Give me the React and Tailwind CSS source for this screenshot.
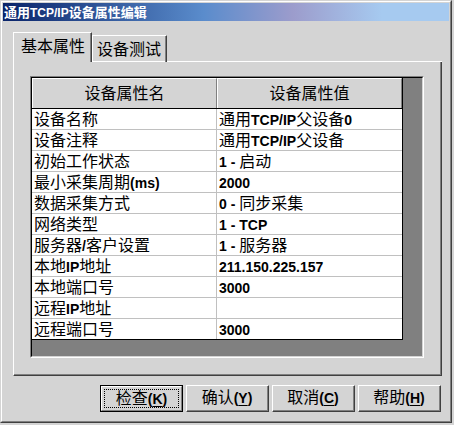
import React from "react";

const rows = [
  ["设备名称", "通用TCP/IP父设备0"],
  ["设备注释", "通用TCP/IP父设备"],
  ["初始工作状态", "1 - 启动"],
  ["最小采集周期(ms)", "2000"],
  ["数据采集方式", "0 - 同步采集"],
  ["网络类型", "1 - TCP"],
  ["服务器/客户设置", "1 - 服务器"],
  ["本地IP地址", "211.150.225.157"],
  ["本地端口号", "3000"],
  ["远程IP地址", ""],
  ["远程端口号", "3000"],
];

function Mixed({ text, latin, cjk }) {
  const parts = text.split(/([\x00-\x7F]+)/).filter(Boolean);
  return parts.map((p, i) =>
    /^[\x00-\x7F]+$/.test(p) ? (
      <span key={i} className={latin}>{p}</span>
    ) : (
      <span key={i} className={cjk}>{p}</span>
    )
  );
}

function Btn({ label, k, isDefault }) {
  const inner = (
    <span className="whitespace-nowrap leading-[20px]">
      <span className="text-[16px]">{label}</span>
      <span className="text-[14px] font-bold">
        (<span className="underline underline-offset-2">{k}</span>)
      </span>
    </span>
  );
  if (isDefault) {
    return (
      <div className="w-[83px] h-[27px] border border-black flex">
        <div className="flex-1 flex border-t border-l border-white border-r border-b border-r-[#808080] border-b-[#808080] p-[2px]">
          <div className="flex-1 flex items-center justify-center border border-dotted border-black">
            {inner}
          </div>
        </div>
      </div>
    );
  }
  return (
    <div className="w-[83px] h-[27px] flex border-t border-l border-white border-r border-b border-r-[#404040] border-b-[#404040]">
      <div className="flex-1 flex items-center justify-center border-r border-b border-r-[#808080] border-b-[#808080]">
        {inner}
      </div>
    </div>
  );
}

export default function App() {
  return (
    <div className="w-[454px] h-[425px] bg-[#d4d4d4] text-black font-['Liberation_Sans','Noto_Sans_CJK_SC',sans-serif] overflow-hidden">
      <div className="w-[452px] h-[423px] border-t border-l border-[#d4d4d4] border-r border-b border-r-[#404040] border-b-[#404040] flex">
        <div className="flex-1 flex flex-col border-t border-l border-white border-r border-b border-r-[#808080] border-b-[#808080] p-[1px]">
          {/* Title bar */}
          <div className="h-[18px] flex items-center pl-[1px] bg-[linear-gradient(to_right,#0a246a,#5a8ccc_45%,#9c9ccc_65%,#a6caf0_85%,#a6caf0)] text-white font-bold">
            <span className="leading-[18px] whitespace-nowrap">
              <Mixed text="通用TCP/IP设备属性编辑" latin="text-[12px]" cjk="text-[13px]" />
            </span>
          </div>

          {/* Tabs */}
          <div className="mt-[11px] ml-[10px] w-[429px] flex items-end">
            <div className="w-[79px] h-[30px] border-t border-l border-white border-r border-r-[#404040] flex">
              <div className="flex-1 border-r border-r-[#808080] pl-[7px] pt-[2px]">
                <span className="text-[16px] leading-[20px]">基本属性</span>
              </div>
            </div>
            <div className="w-[75px] h-[27px] border-b border-white flex flex-col">
              <div className="flex-1 border-t border-l border-white border-r border-r-[#404040] flex">
                <div className="flex-1 border-r border-r-[#808080] pl-[4px] pt-[2px]">
                  <span className="text-[16px] leading-[20px]">设备测试</span>
                </div>
              </div>
            </div>
            <div className="flex-1 h-[1px] bg-white"></div>
          </div>

          {/* Panel */}
          <div className="ml-[10px] w-[429px] h-[314px] border-l border-white border-r border-b border-r-[#404040] border-b-[#404040] flex">
            <div className="flex-1 border-r border-b border-r-[#808080] border-b-[#808080] pl-[16px] pt-[14px]">
              {/* Grid */}
              <div className="w-[394px] h-[282px] border-t border-l border-[#808080] border-r border-b border-r-white border-b-white flex">
                <div className="flex-1 border-t border-l border-black border-r border-b border-r-[#d4d4d4] border-b-[#d4d4d4] bg-[#808080] flex flex-col items-start">
                  <div className="w-[371px] border-r border-b border-black bg-white">
                    {/* header */}
                    <div className="flex h-[31px] border-b border-black bg-[#d4d4d4]">
                      <div className="w-[185px] border-t border-l border-white border-r border-r-[#808080] flex items-center justify-center">
                        <span className="text-[16px] leading-[20px]">设备属性名</span>
                      </div>
                      <div className="w-[185px] border-t border-l border-white border-r border-r-[#808080] flex items-center justify-center">
                        <span className="text-[16px] leading-[20px]">设备属性值</span>
                      </div>
                    </div>
                    {rows.map(([n, v], i) => (
                      <div
                        key={i}
                        className={
                          i === rows.length - 1
                            ? "flex h-[20px]"
                            : "flex h-[21px] border-b border-[#c0c0c0]"
                        }
                      >
                        <div className="w-[185px] border-r border-[#c0c0c0] pl-[2px] whitespace-nowrap leading-[20px] pt-[1px]">
                          <Mixed text={n} latin="text-[14px] font-bold" cjk="text-[16px]" />
                        </div>
                        <div className="w-[185px] pl-[2px] whitespace-nowrap leading-[20px] pt-[1px]">
                          <Mixed text={v} latin="text-[14px] font-bold" cjk="text-[16px]" />
                        </div>
                      </div>
                    ))}
                  </div>
                </div>
              </div>
            </div>
          </div>

          {/* Buttons */}
          <div className="mt-[9px] ml-[97px] flex gap-[3px]">
            <Btn label="检查" k="K" isDefault />
            <Btn label="确认" k="Y" />
            <Btn label="取消" k="C" />
            <Btn label="帮助" k="H" />
          </div>
        </div>
      </div>
    </div>
  );
}
